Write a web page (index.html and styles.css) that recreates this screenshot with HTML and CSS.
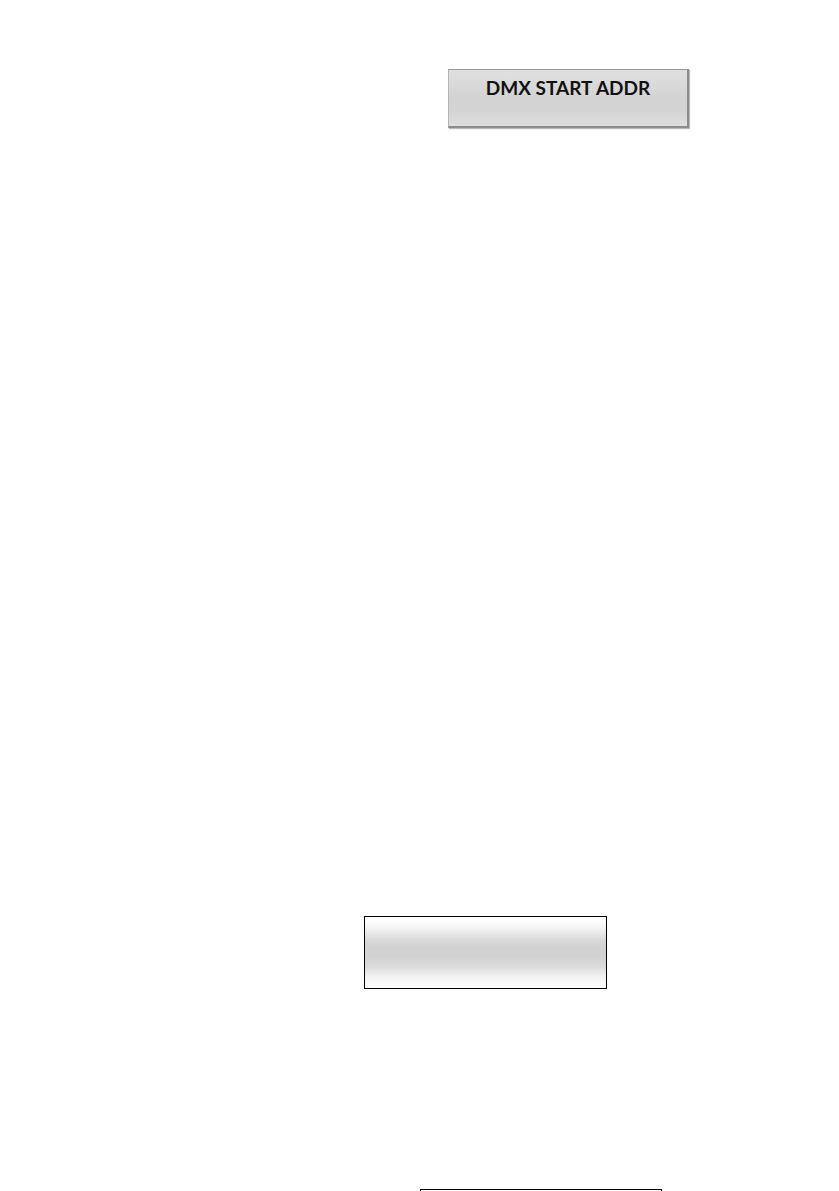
FILE: index.html
```html
<!DOCTYPE html>
<html lang="en">
<head>
    <meta charset="UTF-8">
    <meta name="viewport" content="width=device-width, initial-scale=1.0">
    <title>DMX Start Address</title>
    <link rel="stylesheet" href="styles.css">
</head>
<body>
    <main class="page">
        <button type="button" class="menu-button">DMX START ADDR</button>
        <div class="panel panel-middle"></div>
        <div class="panel panel-bottom"></div>
    </main>
</body>
</html>
```

FILE: styles.css
```css
* { box-sizing: border-box; }
body { font-family: Lato, Carlito, sans-serif; margin: 0; background: #fff; }
.page { display: flex; flex-direction: column; align-items: flex-start; height: 100vh; padding-top: 69px; overflow: hidden; }
.page > * { flex-shrink: 0; }

.menu-button {
    width: 241px;
    height: 59px;
    margin-left: 448px;
    padding: 0 0 20px;
    border: 1px solid #b4b4b4;
    border-top-color: #999;
    border-right: 2px solid #8c8c8c;
    border-bottom: 2px solid #8c8c8c;
    background: linear-gradient(#e0e0e0, #d3d3d3 50%, #d3d3d3 70%, #dedede);
    box-shadow: 1px 1px 1px #bbb;
    color: #111;
    font-family: inherit;
    font-size: 19px;
    font-weight: 700;
    line-height: 20px;
}

/* empty display boxes */
.panel { width: 243px; height: 73px; border: 1px solid #000; background: linear-gradient(#fff 4%, #f4f4f4 15%, #dadada 32%, #d2d2d2 42%, #d2d2d2 56%, #dadada 70%, #f2f2f2 84%, #fff); }
.panel-middle { margin-top: 788px; margin-left: 364px; }
.panel-bottom { width: 242px; margin-top: 200px; margin-left: 420px; }
```
